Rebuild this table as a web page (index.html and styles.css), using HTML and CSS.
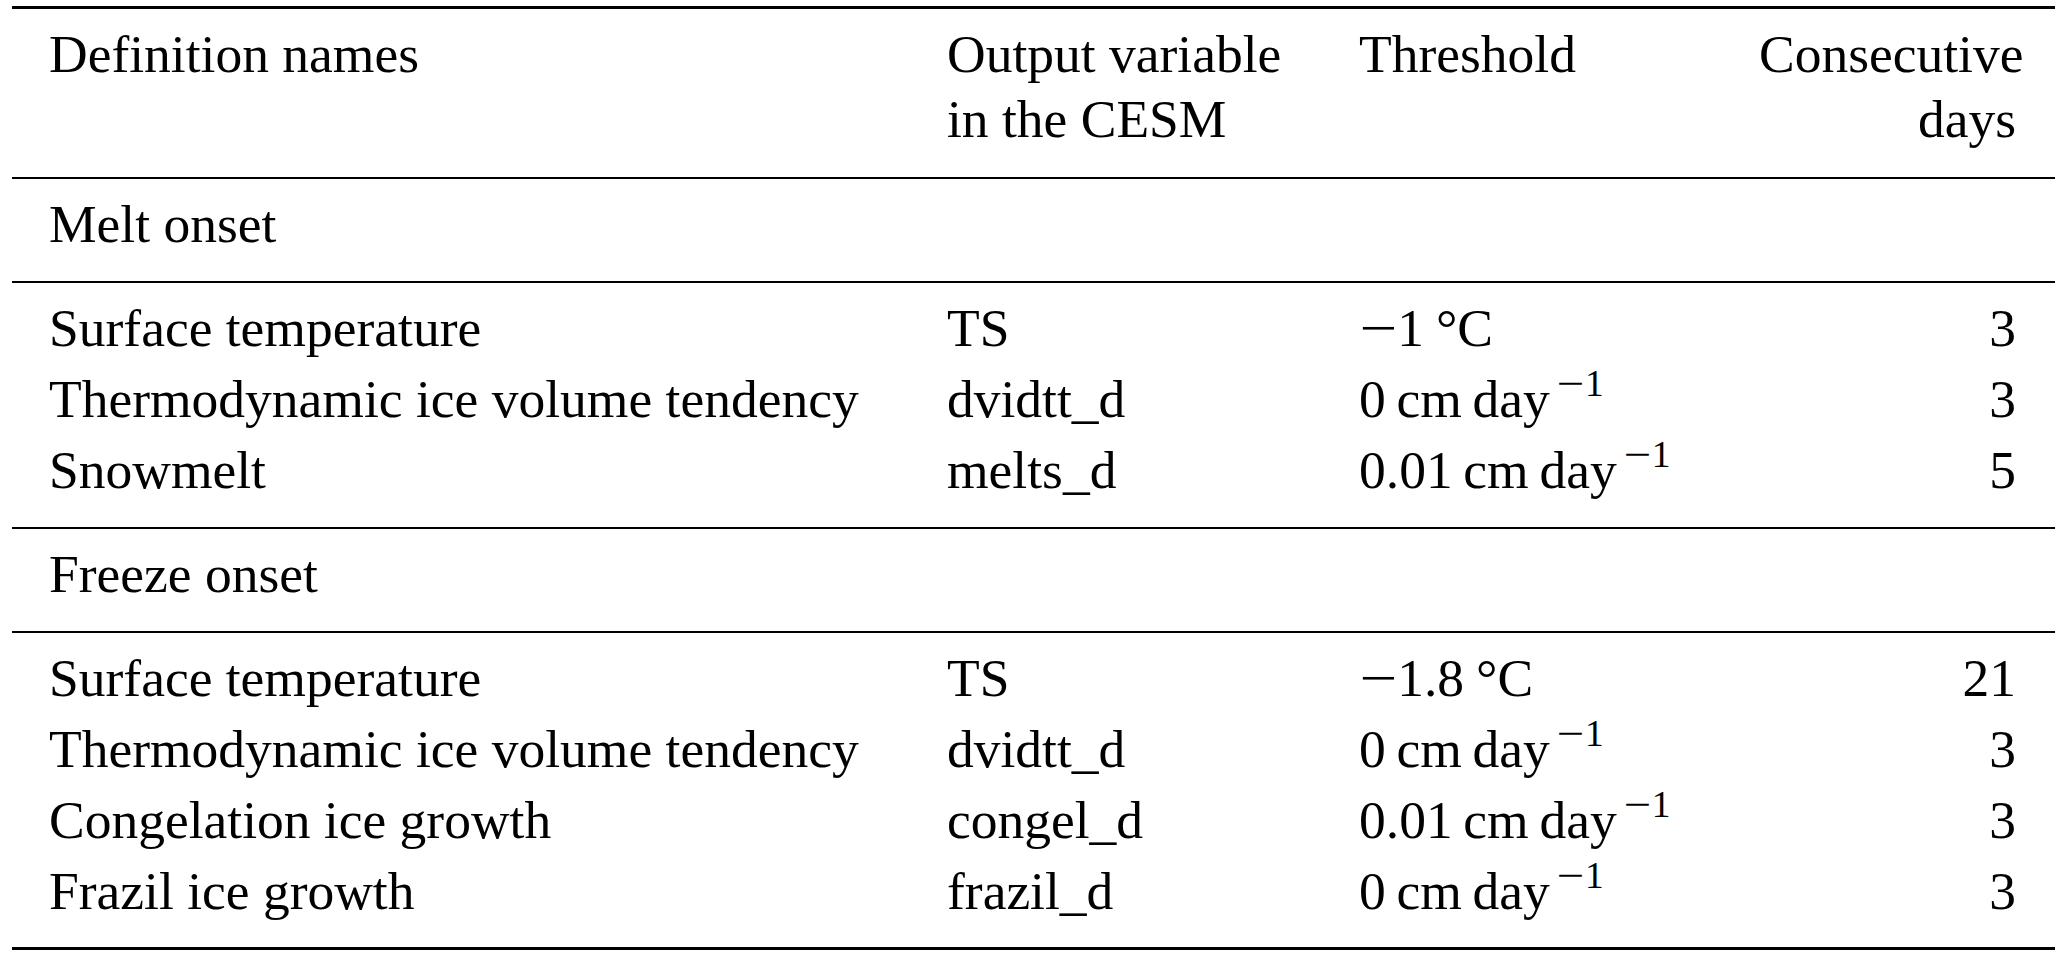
FILE: index.html
```html
<!DOCTYPE html>
<html lang="en">
<head>
<meta charset="utf-8">
<title>Melt and freeze onset definitions</title>
<link rel="stylesheet" href="styles.css">
</head>
<body>
<table class="defs">
  <colgroup>
    <col class="c-name">
    <col class="c-var">
    <col class="c-thr">
    <col class="c-days">
  </colgroup>
  <thead>
    <tr>
      <th>Definition names</th>
      <th>Output variable<br>in the CESM</th>
      <th>Threshold</th>
      <th class="num">Consecutive<br>days</th>
    </tr>
  </thead>
  <tbody>
    <tr class="group"><td colspan="4">Melt onset</td></tr>
    <tr class="first"><td>Surface temperature</td><td>TS</td><td><span class="neg">−</span>1<span class="unit">°C</span></td><td class="num">3</td></tr>
    <tr><td>Thermodynamic ice volume tendency</td><td>dvidtt_d</td><td>0&thinsp;cm&thinsp;day<span class="sup"><span class="minus">−</span>1</span></td><td class="num">3</td></tr>
    <tr class="last"><td>Snowmelt</td><td>melts_d</td><td>0.01&thinsp;cm&thinsp;day<span class="sup"><span class="minus">−</span>1</span></td><td class="num">5</td></tr>
  </tbody>
  <tbody>
    <tr class="group"><td colspan="4">Freeze onset</td></tr>
    <tr class="first"><td>Surface temperature</td><td>TS</td><td><span class="neg">−</span>1.8<span class="unit">°C</span></td><td class="num">21</td></tr>
    <tr><td>Thermodynamic ice volume tendency</td><td>dvidtt_d</td><td>0&thinsp;cm&thinsp;day<span class="sup"><span class="minus">−</span>1</span></td><td class="num">3</td></tr>
    <tr><td>Congelation ice growth</td><td>congel_d</td><td>0.01&thinsp;cm&thinsp;day<span class="sup"><span class="minus">−</span>1</span></td><td class="num">3</td></tr>
    <tr class="last"><td>Frazil ice growth</td><td>frazil_d</td><td>0&thinsp;cm&thinsp;day<span class="sup"><span class="minus">−</span>1</span></td><td class="num">3</td></tr>
  </tbody>
</table>
</body>
</html>
```

FILE: styles.css
```css
html, body {
  margin: 0;
  padding: 0;
  background: #fff;
}

body {
  padding: 6px 0 0 12px;
  font-family: "Liberation Serif", "Times New Roman", serif;
  color: #000;
}

.defs {
  border-collapse: separate;
  border-spacing: 0;
  table-layout: fixed;
  width: 2043px;
  font-size: 53.5px;
  border-top: 3px solid #000;
  border-bottom: 3px solid #000;
}

.c-name { width: 898px; }
.c-var { width: 412px; }
.c-thr { width: 400px; }
.c-days { width: 333px; }

.defs th,
.defs td {
  padding: 0 38px 0 37px;
  text-align: left;
  font-weight: normal;
  line-height: 71px;
  white-space: nowrap;
  vertical-align: top;
}

.defs .num {
  text-align: right;
  padding-right: 39px;
}

.defs thead th {
  line-height: 65px;
  padding-top: 13px;
  padding-bottom: 25px;
  border-bottom: 2px solid #000;
}

.defs tr.group td {
  padding-top: 10px;
  padding-bottom: 21px;
  border-bottom: 2px solid #000;
}

.defs tr.first td {
  padding-top: 10px;
}

.defs tr.last td {
  padding-bottom: 21px;
  border-bottom: 2px solid #000;
}

.defs tbody:last-child tr.last td {
  border-bottom: none;
  padding-bottom: 20px;
}

.neg {
  display: inline-block;
  transform: scaleX(1.25);
  margin: 0 4px 0 4px;
}

.unit {
  margin-left: 12px;
}

.sup {
  font-size: 0.7em;
  line-height: 0;
  vertical-align: 21px;
  margin-left: 8px;
}

.minus {
  display: inline-block;
  transform: scaleX(1.3);
  margin: 0 4px 0 2px;
}
```
